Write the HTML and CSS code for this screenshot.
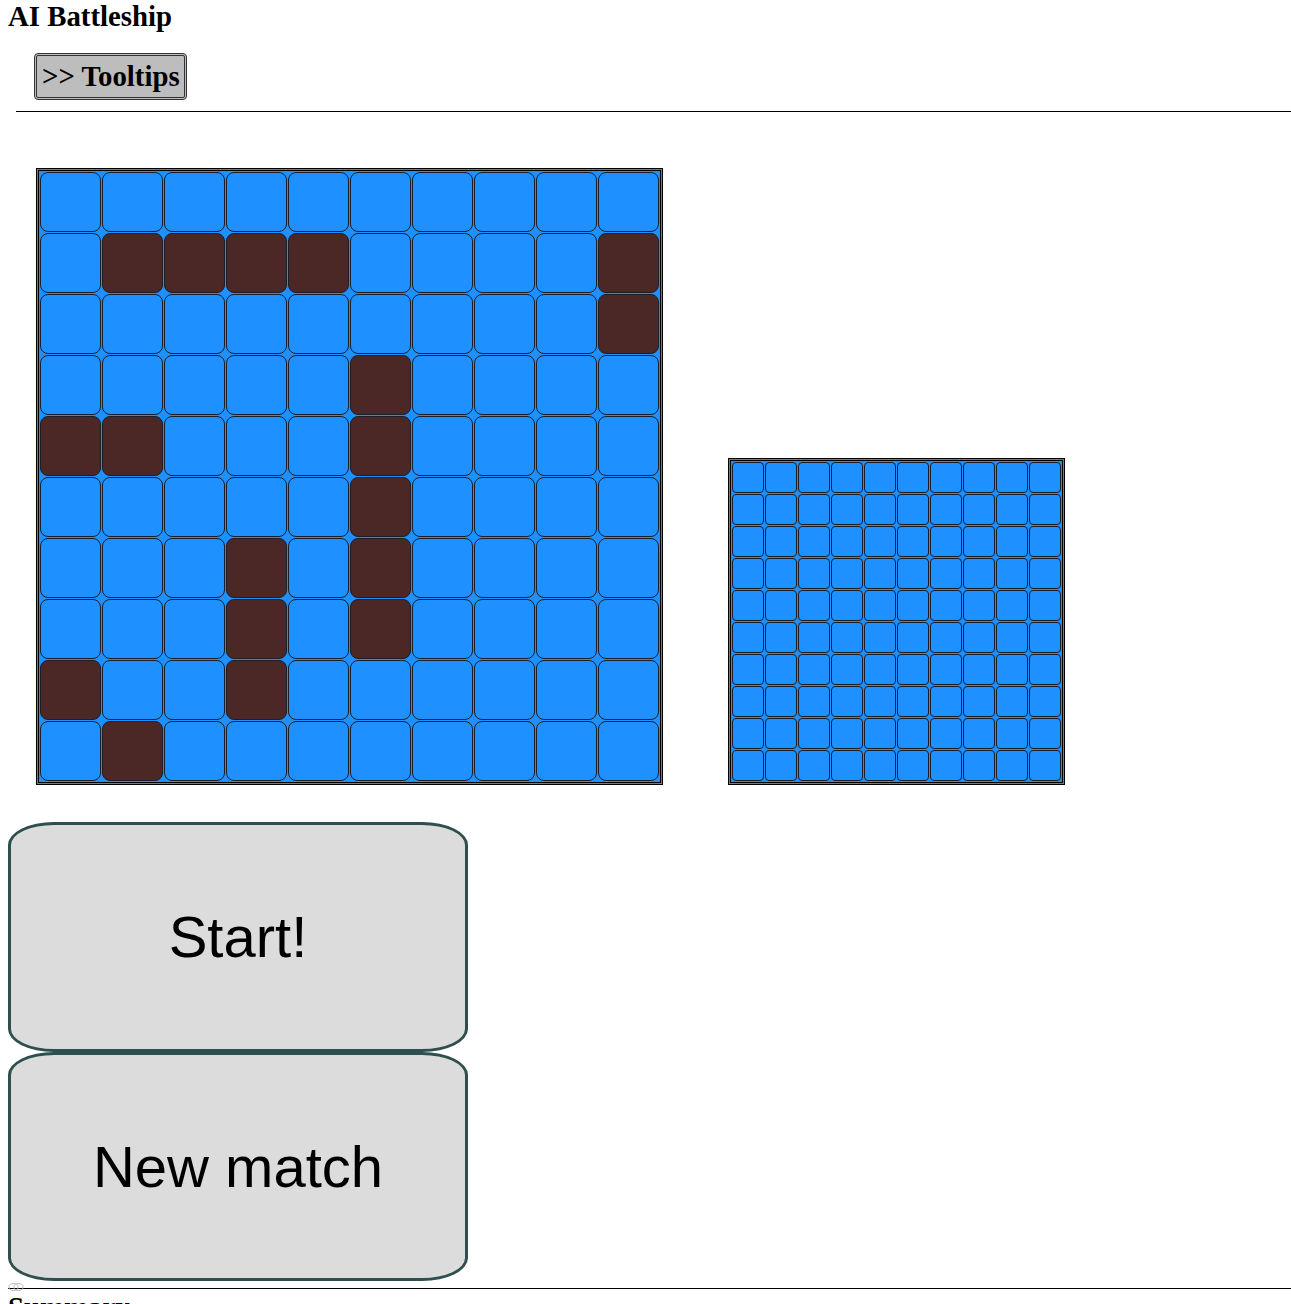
FILE: index.html
```html
<!DOCTYPE html>
<html>
<head>
<meta charset="utf-8">
<title>AI Battleship</title>
<link rel="stylesheet" href="styles.css">
</head>
<body>
<h2 class="title">AI Battleship</h2>
<button class="tips">&gt;&gt; Tooltips</button>
<hr class="rule-top">
<div class="boards">
  <div class="board big">
    <i class="c"></i><i class="c"></i><i class="c"></i><i class="c"></i><i class="c"></i><i class="c"></i><i class="c"></i><i class="c"></i><i class="c"></i><i class="c"></i>
    <i class="c"></i><i class="c s"></i><i class="c s"></i><i class="c s"></i><i class="c s"></i><i class="c"></i><i class="c"></i><i class="c"></i><i class="c"></i><i class="c s"></i>
    <i class="c"></i><i class="c"></i><i class="c"></i><i class="c"></i><i class="c"></i><i class="c"></i><i class="c"></i><i class="c"></i><i class="c"></i><i class="c s"></i>
    <i class="c"></i><i class="c"></i><i class="c"></i><i class="c"></i><i class="c"></i><i class="c s"></i><i class="c"></i><i class="c"></i><i class="c"></i><i class="c"></i>
    <i class="c s"></i><i class="c s"></i><i class="c"></i><i class="c"></i><i class="c"></i><i class="c s"></i><i class="c"></i><i class="c"></i><i class="c"></i><i class="c"></i>
    <i class="c"></i><i class="c"></i><i class="c"></i><i class="c"></i><i class="c"></i><i class="c s"></i><i class="c"></i><i class="c"></i><i class="c"></i><i class="c"></i>
    <i class="c"></i><i class="c"></i><i class="c"></i><i class="c s"></i><i class="c"></i><i class="c s"></i><i class="c"></i><i class="c"></i><i class="c"></i><i class="c"></i>
    <i class="c"></i><i class="c"></i><i class="c"></i><i class="c s"></i><i class="c"></i><i class="c s"></i><i class="c"></i><i class="c"></i><i class="c"></i><i class="c"></i>
    <i class="c s"></i><i class="c"></i><i class="c"></i><i class="c s"></i><i class="c"></i><i class="c"></i><i class="c"></i><i class="c"></i><i class="c"></i><i class="c"></i>
    <i class="c"></i><i class="c s"></i><i class="c"></i><i class="c"></i><i class="c"></i><i class="c"></i><i class="c"></i><i class="c"></i><i class="c"></i><i class="c"></i>
  </div>
  <div class="board small">
    <i class="c"></i><i class="c"></i><i class="c"></i><i class="c"></i><i class="c"></i><i class="c"></i><i class="c"></i><i class="c"></i><i class="c"></i><i class="c"></i>
    <i class="c"></i><i class="c"></i><i class="c"></i><i class="c"></i><i class="c"></i><i class="c"></i><i class="c"></i><i class="c"></i><i class="c"></i><i class="c"></i>
    <i class="c"></i><i class="c"></i><i class="c"></i><i class="c"></i><i class="c"></i><i class="c"></i><i class="c"></i><i class="c"></i><i class="c"></i><i class="c"></i>
    <i class="c"></i><i class="c"></i><i class="c"></i><i class="c"></i><i class="c"></i><i class="c"></i><i class="c"></i><i class="c"></i><i class="c"></i><i class="c"></i>
    <i class="c"></i><i class="c"></i><i class="c"></i><i class="c"></i><i class="c"></i><i class="c"></i><i class="c"></i><i class="c"></i><i class="c"></i><i class="c"></i>
    <i class="c"></i><i class="c"></i><i class="c"></i><i class="c"></i><i class="c"></i><i class="c"></i><i class="c"></i><i class="c"></i><i class="c"></i><i class="c"></i>
    <i class="c"></i><i class="c"></i><i class="c"></i><i class="c"></i><i class="c"></i><i class="c"></i><i class="c"></i><i class="c"></i><i class="c"></i><i class="c"></i>
    <i class="c"></i><i class="c"></i><i class="c"></i><i class="c"></i><i class="c"></i><i class="c"></i><i class="c"></i><i class="c"></i><i class="c"></i><i class="c"></i>
    <i class="c"></i><i class="c"></i><i class="c"></i><i class="c"></i><i class="c"></i><i class="c"></i><i class="c"></i><i class="c"></i><i class="c"></i><i class="c"></i>
    <i class="c"></i><i class="c"></i><i class="c"></i><i class="c"></i><i class="c"></i><i class="c"></i><i class="c"></i><i class="c"></i><i class="c"></i><i class="c"></i>
  </div>
</div>
<div class="actions">
  <button class="big-btn">Start!</button>
  <button class="big-btn second">New match</button>
</div>
<div class="footer">
  <svg class="mini" width="16" height="10" viewBox="0 0 16 10"><ellipse cx="5.5" cy="5" rx="4.5" ry="3.5" fill="none" stroke="#bbb" stroke-width="1"/><ellipse cx="10.5" cy="5" rx="4.5" ry="3.5" fill="none" stroke="#bbb" stroke-width="1"/></svg>
  <hr class="rule-bottom">
  <h2 class="summary">Summary</h2>
</div>
</body>
</html>
```
FILE: styles.css
```css
html, body {
  margin: 0;
  padding: 0;
}
body {
  padding: 0 8px;
  font-family: "Liberation Serif", "Times New Roman", serif;
  color: #000;
  background: #fff;
}
.title {
  margin: 0;
  font-size: 28.8px;
  font-weight: bold;
  line-height: 33px;
}
.tips {
  display: block;
  margin: 20px 0 0 26px;
  height: 47px;
  padding: 3px 4px 3px 5px;
  font-family: "Liberation Serif", "Times New Roman", serif;
  font-size: 28.8px;
  font-weight: bold;
  color: #000;
  background: #bdbdbd;
  border: 3px double #333;
  border-radius: 4px;
  line-height: 33px;
}
.rule-top {
  margin: 11px -8px 0 8px;
  border: 0;
  border-top: 1px solid #000;
  height: 0;
}
.boards {
  display: flex;
  align-items: flex-end;
  gap: 65px;
  margin-top: 56px;
  padding-left: 28px;
}
.board {
  display: grid;
  gap: 1px;
  padding: 1px;
  border: 3px double #000;
  background: #1e90ff;
}
.big {
  grid-template-columns: repeat(10, 61px);
  grid-auto-rows: 60px;
}
.small {
  grid-template-columns: repeat(10, 32px);
  grid-auto-rows: 31px;
}
.c {
  display: block;
  box-sizing: border-box;
  background: #1e90ff;
  border: 1px solid #1a1f2a;
}
.big .c {
  border-radius: 8px;
}
.small .c {
  border-radius: 4px;
}
.c.s {
  background: #4b2826;
}
.actions {
  margin-top: 37px;
  width: 460px;
}
.big-btn {
  display: block;
  box-sizing: border-box;
  width: 460px;
  height: 229.5px;
  margin: 0;
  padding: 0;
  background: #dcdcdc;
  border: 3px solid #2f4f4f;
  border-radius: 10%;
  font-family: "Liberation Sans", Arial, sans-serif;
  font-size: 58px;
  color: #000;
}
.footer {
  position: relative;
  margin-top: 7px;
}
.mini {
  position: absolute;
  left: 0;
  top: -6px;
}
.rule-bottom {
  margin: 0 -8px 0 0;
  border: 0;
  border-top: 1px solid #000;
  height: 0;
}
.summary {
  margin: 0;
  padding-top: 2px;
  font-size: 28.8px;
  line-height: 33px;
}
```
